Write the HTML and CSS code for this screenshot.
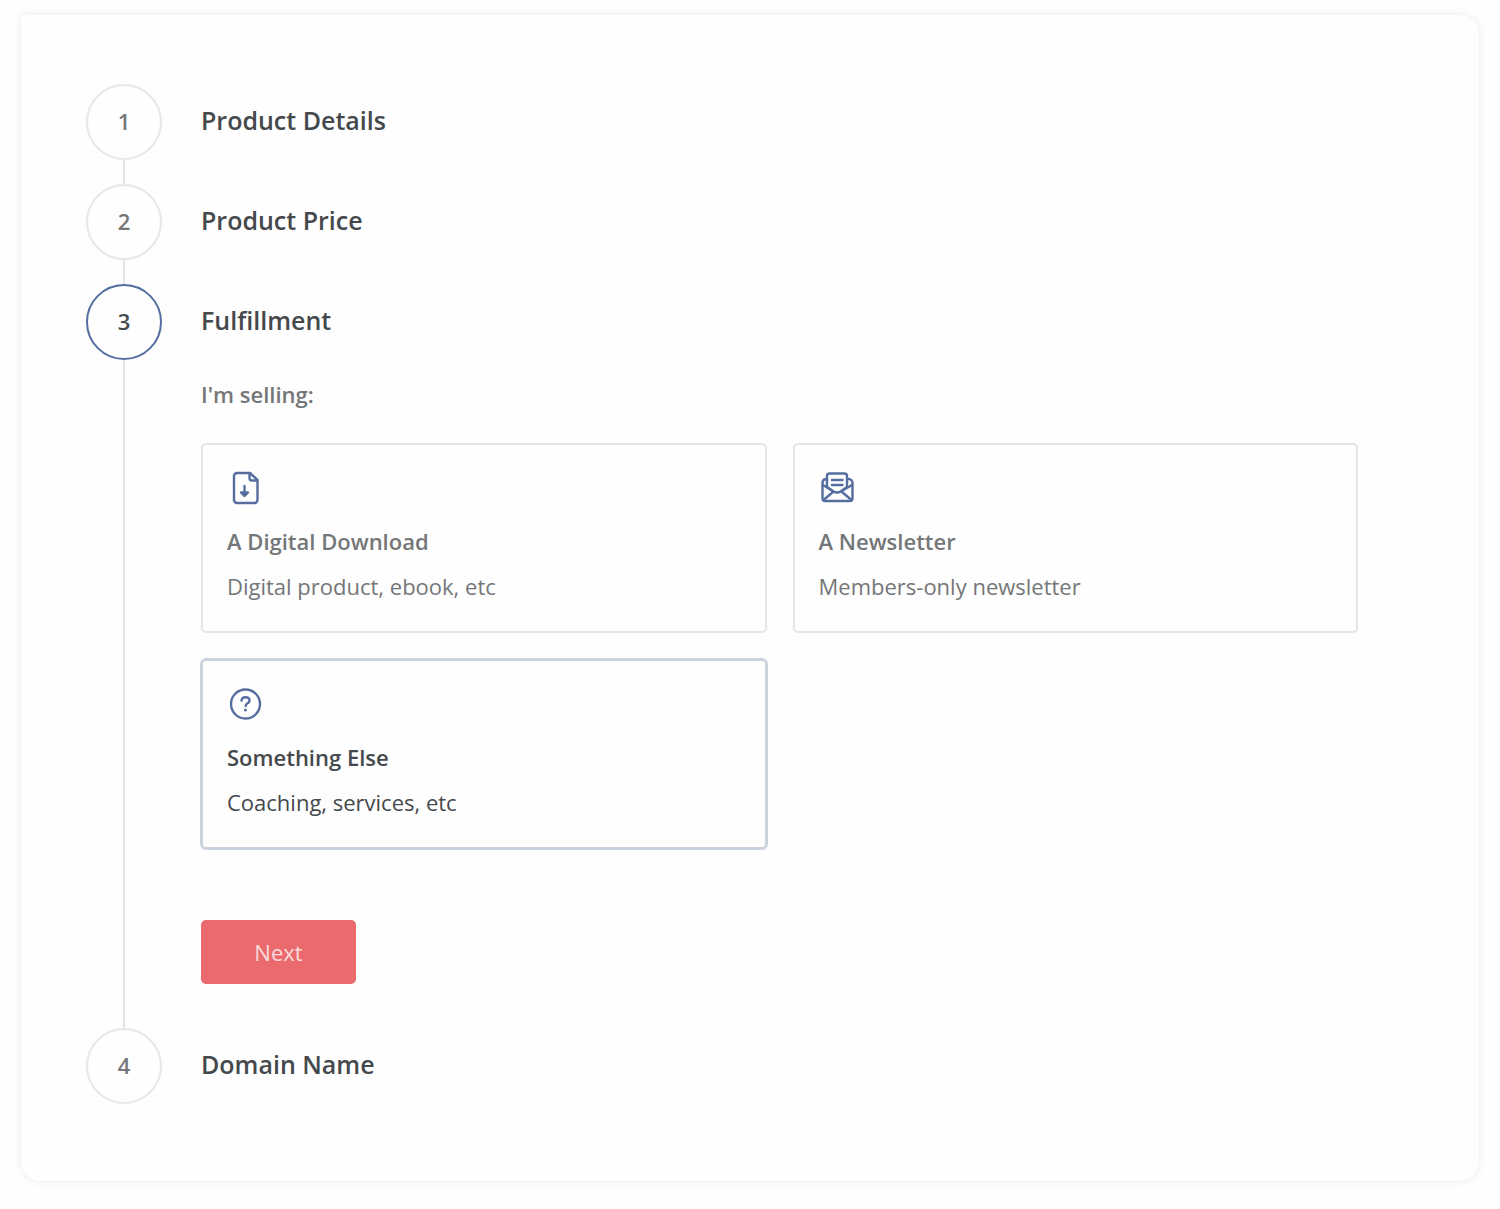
FILE: index.html
```html
<!DOCTYPE html>
<html lang="en">
<head>
<meta charset="UTF-8">
<meta name="viewport" content="width=device-width, initial-scale=1.0">
<title>Create Product</title>
<link rel="stylesheet" href="styles.css">
</head>
<body>
<form class="wizard">
  <section class="step">
    <div class="marker"><span class="number">1</span></div>
    <div class="step-body"><h2>Product Details</h2></div>
  </section>

  <section class="step">
    <div class="marker"><span class="number">2</span></div>
    <div class="step-body"><h2>Product Price</h2></div>
  </section>

  <section class="step active">
    <div class="marker"><span class="number">3</span></div>
    <div class="step-body">
      <h2>Fulfillment</h2>
      <fieldset>
        <legend>I'm selling:</legend>
        <div class="options">
          <label class="option">
            <input type="radio" name="selling" value="download">
            <svg class="icon" viewBox="0 0 38 38">
              <path d="M23 4H10a3 3 0 0 0-3 3v24a3 3 0 0 0 3 3h17.500a3 3 0 0 0 3-3V11z"/>
              <path d="M22.500 4.500V9a2.500 2.500 0 0 0 2.500 2.500h5"/>
              <path d="M17.500 17v9M14 23.500l3.500 3.500 3.500-3.500z"/>
            </svg>
            <span class="option-title">A Digital Download</span>
            <span class="option-text">Digital product, ebook, etc</span>
          </label>
          <label class="option">
            <input type="radio" name="selling" value="newsletter">
            <svg class="icon" viewBox="0 0 38 38">
              <path d="M8 18V7a2.500 2.500 0 0 1 2.500-2.500h15A2.500 2.500 0 0 1 28 7v11l-6.500 4.500q-3.500 2-7 0z"/>
              <path d="M8 10H7a4 4 0 0 0-3.500 4v15.500A2.500 2.500 0 0 0 6 32h25a2.500 2.500 0 0 0 2.500-2.500V14a4 4 0 0 0-4-4H28"/>
              <path d="M4 16l10.500 6.500M33 16l-11 6.500M4.500 31l9.500-8M32.500 31l-9.500-8M13 11h10.500M13 16h10.500"/>
            </svg>
            <span class="option-title">A Newsletter</span>
            <span class="option-text">Members-only newsletter</span>
          </label>
          <label class="option">
            <input type="radio" name="selling" value="other" checked>
            <svg class="icon" viewBox="0 0 38 38">
              <circle cx="18.500" cy="19" r="14.500"/>
              <path d="M14.500 15.500c.3-2.200 1.900-3.300 4-3.300 2.300 0 4 1.300 4 3.300 0 3-3.800 2.700-3.800 5.500"/>
              <circle class="dot" cx="18.500" cy="25" r="1.500"/>
            </svg>
            <span class="option-title">Something Else</span>
            <span class="option-text">Coaching, services, etc</span>
          </label>
        </div>
      </fieldset>
      <button type="button" class="btn">Next</button>
    </div>
  </section>

  <section class="step">
    <div class="marker"><span class="number">4</span></div>
    <div class="step-body"><h2>Domain Name</h2></div>
  </section>
</form>
</body>
</html>
```

FILE: styles.css
```css
* {
    box-sizing: border-box;
}

body {
    margin: 0;
    padding: 15px 21px 28px;
    background-color: #fefefe;
    font-family: "Open Sans", sans-serif;
    font-size: 22px;
    line-height: 34px;
    color: #747678;
}

.wizard {
    padding: 69px 121px 77px 65px;
    background-color: #fefefe;
    border-radius: 0 20px 20px 20px;
    box-shadow: 0 0 8px rgba(0, 0, 0, 0.08);
}

.step {
    display: flex;
    gap: 39px;
}

.marker {
    display: flex;
    flex-direction: column;
    align-items: center;
    flex-shrink: 0;
}

/* line down to the next step */
.marker::after {
    content: "";
    flex: 1;
    width: 2px;
    min-height: 24px;
    background-color: #e2e3e4;
}

.step:last-child .marker::after {
    display: none;
}

.number {
    width: 76px;
    height: 76px;
    border: 2px solid #e6e7e8;
    border-radius: 50%;
    font-weight: 600;
    line-height: 71px;
    text-align: center;
}

.active .number {
    border-color: #566d9f;
    color: #45494c;
}

.step-body {
    flex: 1;
}

h2 {
    margin: 0;
    font-size: 25px;
    font-weight: 600;
    line-height: 72px;
    color: #45494c;
}

fieldset {
    margin: 0;
    padding: 0;
    border: none;
}

legend {
    padding: 21px 0 32px;
    font-weight: 600;
}

.options {
    display: grid;
    grid-template-columns: 1fr 1fr;
    gap: 26px;
}

.option {
    display: flex;
    flex-direction: column;
    padding: 24px 24px 28px;
    border: 2px solid #e3e5e7;
    border-radius: 5px;
    cursor: pointer;
}

.option input {
    position: absolute;
    opacity: 0;
}

.option:has(input:checked) {
    border-color: #cad2de;
    box-shadow: 0 0 0 1px #cad2de;
    color: #45494c;
}

.icon {
    width: 38px;
    height: 38px;
    margin-bottom: 17px;
    fill: none;
    stroke: #566d9f;
    stroke-width: 2.4;
    stroke-linecap: round;
    stroke-linejoin: round;
}

.icon .dot {
    fill: #566d9f;
    stroke: none;
}

.option-title {
    margin-bottom: 11px;
    font-weight: 600;
}

.btn {
    display: block;
    width: 155px;
    height: 64px;
    margin: 71px 0 44px;
    border: none;
    border-radius: 5px;
    background-color: #eb6a6e;
    color: #fbdcdc;
    font-family: inherit;
    font-size: 22px;
    cursor: pointer;
}
```
